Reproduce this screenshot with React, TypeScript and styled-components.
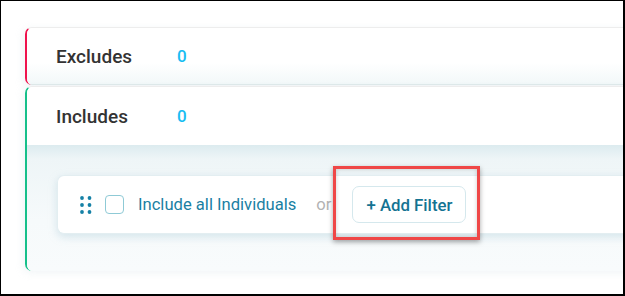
import React from "react";
import styled, { createGlobalStyle } from "styled-components";

const Global = createGlobalStyle`
  html, body { margin: 0; padding: 0; background: #fff; }
  body { font-family: Roboto, "Noto Sans", Arial, sans-serif; }
  * { box-sizing: border-box; }
`;

const Frame = styled.div`
  width: 625px;
  height: 296px;
  border-top: 1px solid #000;
  border-left: 1px solid #000;
  border-right: 2px solid #000;
  border-bottom: 2px solid #000;
  background: #fff;
  overflow: hidden;
  padding: 26px 0 0 24px;
`;

const Stack = styled.div`
  width: 640px;
  display: flex;
  flex-direction: column;
  gap: 1px;
`;

const Section = styled.section<{ $accent: string }>`
  border-left: 2px solid ${(p) => p.$accent};
  border-top: 1px solid #ededed;
  border-radius: 7px 0 0 7px;
  background: #fff;
  overflow: hidden;
  box-shadow: -2px 2px 8px rgba(180, 200, 210, 0.18);
`;

const Header = styled.div<{ $shade?: boolean }>`
  height: ${(p) => (p.$shade ? "57px" : "58px")};
  display: flex;
  align-items: center;
  padding-left: 29px;
  background: ${(p) =>
    p.$shade
      ? "linear-gradient(to bottom, #fff 0%, #fff 62%, #f2f8f9 100%)"
      : "#fff"};
  border-bottom: ${(p) => (p.$shade ? "1px solid #dfeaea" : "none")};
`;

const Title = styled.span`
  font-size: 19px;
  font-weight: 500;
  color: #333;
  width: 121px;
`;

const Count = styled.span`
  font-size: 17px;
  font-weight: 500;
  color: #19bdf2;
`;

const Body = styled.div`
  background: linear-gradient(to bottom, #dcebef 0px, #eef5f7 14px, #f6fafb 60%, #f8fbfc 100%);
  padding: 30px 0 37px 30px;
`;

const Row = styled.div`
  height: 59px;
  background: #fff;
  border: 1px solid #e3eef1;
  border-right: none;
  border-radius: 7px 0 0 7px;
  box-shadow: 0 3px 8px rgba(150, 190, 205, 0.35);
  display: flex;
  align-items: center;
  padding-left: 22px;
`;

const Handle = styled.svg`
  width: 13px;
  height: 18px;
  margin-right: 12px;
  flex-shrink: 0;
`;

const Check = styled.span`
  width: 19px;
  height: 19px;
  border: 1.5px solid #8fcad6;
  border-radius: 4px;
  margin-right: 14px;
  flex-shrink: 0;
`;

const Label = styled.span`
  font-size: 16.6px;
  color: #1a7fa3;
`;

const Or = styled.span`
  font-size: 16.6px;
  color: #b3b3b3;
  margin-left: 20px;
  margin-right: 21px;
`;

const Highlight = styled.div`
  position: relative;
`;

const AddButton = styled.button`
  height: 37px;
  padding: 0 13px;
  background: #fff;
  border: 1px solid #d5e8ed;
  border-radius: 7px;
  font-family: Roboto, "Noto Sans", Arial, sans-serif;
  font-size: 16.8px;
  font-weight: 500;
  color: #147392;
  cursor: pointer;
`;

const Marker = styled.div`
  position: absolute;
  left: -19px;
  top: -20px;
  width: 147px;
  height: 74px;
  border: 3px solid #ef4747;
  box-shadow: 0 2px 5px rgba(0, 0, 0, 0.35), inset 0 0 4px rgba(0, 0, 0, 0.2);
  pointer-events: none;
`;

function DragHandle() {
  const dots = [] as React.ReactNode[];
  [0, 1].forEach((c) =>
    [0, 1, 2].forEach((r) =>
      dots.push(<circle key={`${c}-${r}`} cx={2 + c * 7.5} cy={2 + r * 7} r={1.9} fill="#1581a6" />)
    )
  );
  return (
    <Handle viewBox="0 0 13 18">
      {dots}
    </Handle>
  );
}

export default function App() {
  return (
    <>
      <Global />
      <Frame>
        <Stack>
          <Section $accent="#f0134d">
            <Header $shade>
              <Title>Excludes</Title>
              <Count>0</Count>
            </Header>
          </Section>
          <Section $accent="#16c08a">
            <Header>
              <Title>Includes</Title>
              <Count>0</Count>
            </Header>
            <Body>
              <Row>
                <DragHandle />
                <Check />
                <Label>Include all Individuals</Label>
                <Or>or</Or>
                <Highlight>
                  <AddButton>+ Add Filter</AddButton>
                  <Marker />
                </Highlight>
              </Row>
            </Body>
          </Section>
        </Stack>
      </Frame>
    </>
  );
}
